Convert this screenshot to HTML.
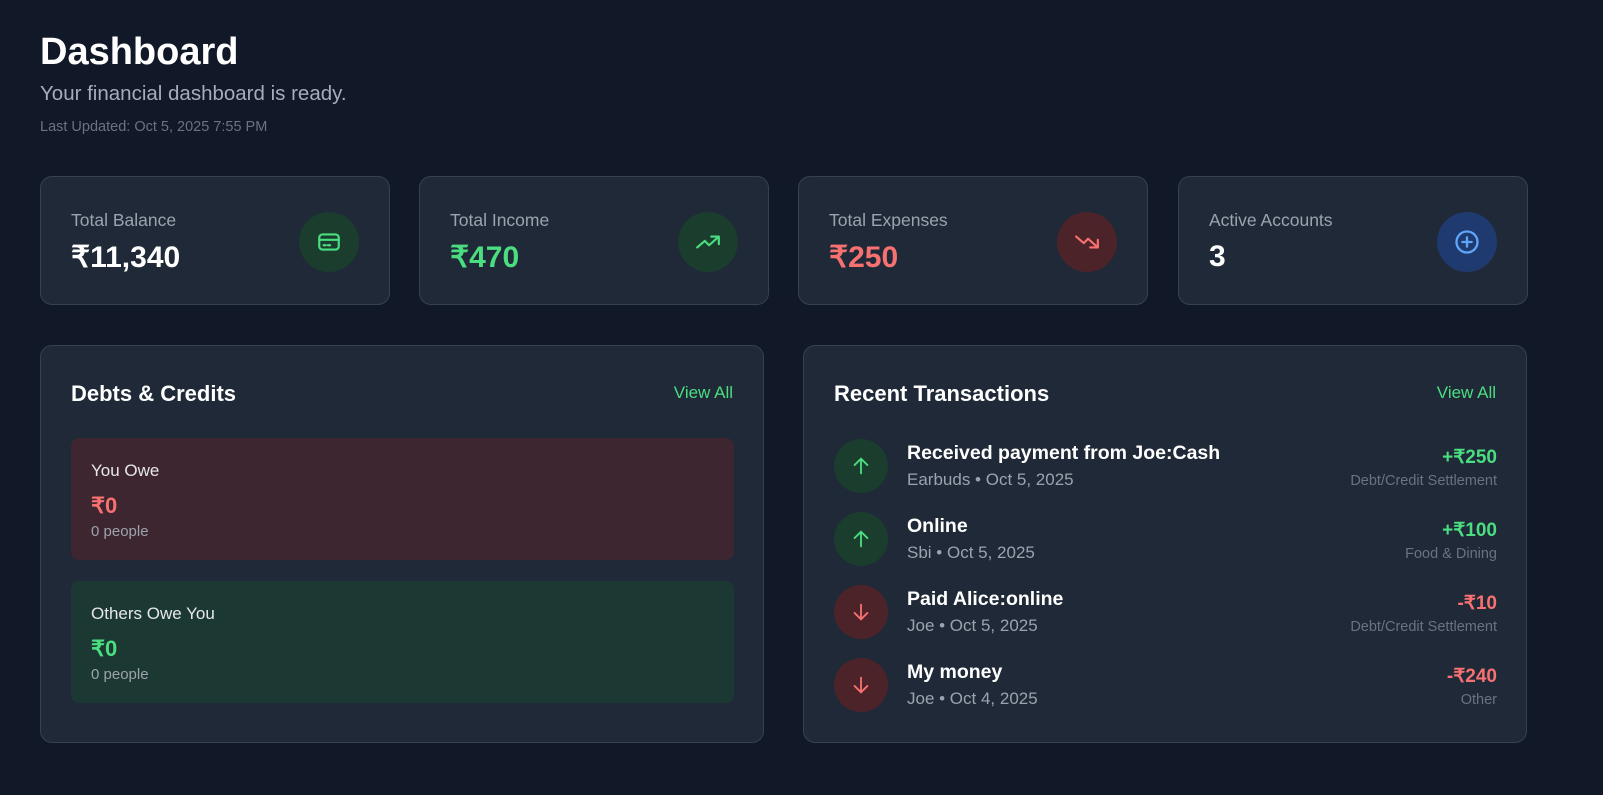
<!DOCTYPE html>
<html><head><meta charset="utf-8"><style>
*{box-sizing:border-box;margin:0;padding:0}
body{width:1603px;height:795px;background:#111827;font-family:"Liberation Sans",sans-serif;color:#fff;position:relative;overflow:hidden}
h1{position:absolute;left:40px;top:31px;font-size:38px;font-weight:700}
.sub{position:absolute;left:40px;top:82px;font-size:20.5px;color:#a5adbb}
.upd{position:absolute;left:40px;top:119px;font-size:14.5px;color:#6b7280}
.card{position:absolute;top:176px;width:350px;height:129px;background:#1f2937;border:1px solid #374151;border-radius:12px}
.card .l{position:absolute;left:30px;top:33px;font-size:17.5px;color:#9ca3af}
.card .v{position:absolute;left:30px;top:63px;font-size:30px;font-weight:700}
.ic{position:absolute;right:30px;top:35px;width:60px;height:60px;border-radius:50%;display:flex;align-items:center;justify-content:center}
.panel{position:absolute;top:345px;width:724px;height:398px;background:#1f2937;border:1px solid #374151;border-radius:12px}
.panel h2{position:absolute;left:30px;top:35px;font-size:22px;font-weight:700}
.va{position:absolute;right:30px;top:37px;font-size:17px;color:#4ade80}
.box{position:absolute;left:30px;width:663px;height:122px;border-radius:8px}
.box .t{position:absolute;left:20px;top:23px;font-size:17px;color:#e5e7eb}
.box .a{position:absolute;left:20px;top:55px;font-size:22px;font-weight:700}
.box .p{position:absolute;left:20px;top:85px;font-size:15px;color:#9ca3af}
.tx{position:absolute;left:30px;width:663px;height:54px}
.tx .c{position:absolute;left:0;top:0;width:54px;height:54px;border-radius:50%;display:flex;align-items:center;justify-content:center}
.tx .n{position:absolute;left:73px;top:3px;font-size:19.5px;font-weight:700}
.tx .d{position:absolute;left:73px;top:31px;font-size:17px;color:#9ca3af}
.tx .m{position:absolute;right:0;top:7px;font-size:19px;font-weight:700}
.tx .k{position:absolute;right:0;top:34px;font-size:14.5px;color:#6b7280}
</style></head><body>
<h1>Dashboard</h1>
<div class="sub">Your financial dashboard is ready.</div>
<div class="upd">Last Updated: Oct 5, 2025 7:55 PM</div>

<div class="card" style="left:40px"><div class="l">Total Balance</div><div class="v">₹11,340</div>
<div class="ic" style="background:#1a3d2e"><svg width="26" height="26" viewBox="0 0 24 24" fill="none" stroke="#4ade80" stroke-width="2" stroke-linecap="round"><rect x="3" y="5" width="18" height="14" rx="3"/><path d="M3 10h18M7 15h2M11 15h2"/></svg></div></div>
<div class="card" style="left:419px"><div class="l">Total Income</div><div class="v" style="color:#4ade80">₹470</div>
<div class="ic" style="background:#1a3d2e"><svg width="26" height="26" viewBox="0 0 24 24" fill="none" stroke="#4ade80" stroke-width="2" stroke-linecap="round" stroke-linejoin="round"><path d="M2 17l7-6 4 4 9-8M15 7h7v7"/></svg></div></div>
<div class="card" style="left:798px"><div class="l">Total Expenses</div><div class="v" style="color:#f87171">₹250</div>
<div class="ic" style="background:#4c2329"><svg width="26" height="26" viewBox="0 0 24 24" fill="none" stroke="#f87171" stroke-width="2" stroke-linecap="round" stroke-linejoin="round"><path d="M2 7l7 6 4-4 9 8M15 17h7v-7"/></svg></div></div>
<div class="card" style="left:1178px"><div class="l">Active Accounts</div><div class="v">3</div>
<div class="ic" style="background:#1e3a6e"><svg width="28" height="28" viewBox="0 0 24 24" fill="none" stroke="#60a5fa" stroke-width="2" stroke-linecap="round"><circle cx="12" cy="12" r="9"/><path d="M12 8v8M8 12h8"/></svg></div></div>

<div class="panel" style="left:40px"><h2>Debts &amp; Credits</h2><div class="va">View All</div>
<div class="box" style="top:92px;background:#3d2630"><div class="t">You Owe</div><div class="a" style="color:#f87171">₹0</div><div class="p">0 people</div></div>
<div class="box" style="top:235px;background:#1c3833"><div class="t">Others Owe You</div><div class="a" style="color:#4ade80">₹0</div><div class="p">0 people</div></div>
</div>

<div class="panel" style="left:803px"><h2>Recent Transactions</h2><div class="va">View All</div>
<div class="tx" style="top:93px"><div class="c" style="background:#1a3d2e"><svg width="22" height="22" viewBox="0 0 24 24" fill="none" stroke="#4ade80" stroke-width="2" stroke-linecap="round"><path d="M12 20V4M5 11l7-7 7 7"/></svg></div><div class="n">Received payment from Joe:Cash</div><div class="d">Earbuds • Oct 5, 2025</div><div class="m" style="color:#4ade80">+₹250</div><div class="k">Debt/Credit Settlement</div></div>
<div class="tx" style="top:166px"><div class="c" style="background:#1a3d2e"><svg width="22" height="22" viewBox="0 0 24 24" fill="none" stroke="#4ade80" stroke-width="2" stroke-linecap="round"><path d="M12 20V4M5 11l7-7 7 7"/></svg></div><div class="n">Online</div><div class="d">Sbi • Oct 5, 2025</div><div class="m" style="color:#4ade80">+₹100</div><div class="k">Food &amp; Dining</div></div>
<div class="tx" style="top:239px"><div class="c" style="background:#4c2329"><svg width="22" height="22" viewBox="0 0 24 24" fill="none" stroke="#f87171" stroke-width="2" stroke-linecap="round"><path d="M12 4v16M5 13l7 7 7-7"/></svg></div><div class="n">Paid Alice:online</div><div class="d">Joe • Oct 5, 2025</div><div class="m" style="color:#f87171">-₹10</div><div class="k">Debt/Credit Settlement</div></div>
<div class="tx" style="top:312px"><div class="c" style="background:#4c2329"><svg width="22" height="22" viewBox="0 0 24 24" fill="none" stroke="#f87171" stroke-width="2" stroke-linecap="round"><path d="M12 4v16M5 13l7 7 7-7"/></svg></div><div class="n">My money</div><div class="d">Joe • Oct 4, 2025</div><div class="m" style="color:#f87171">-₹240</div><div class="k">Other</div></div>
</div>
</body></html>
